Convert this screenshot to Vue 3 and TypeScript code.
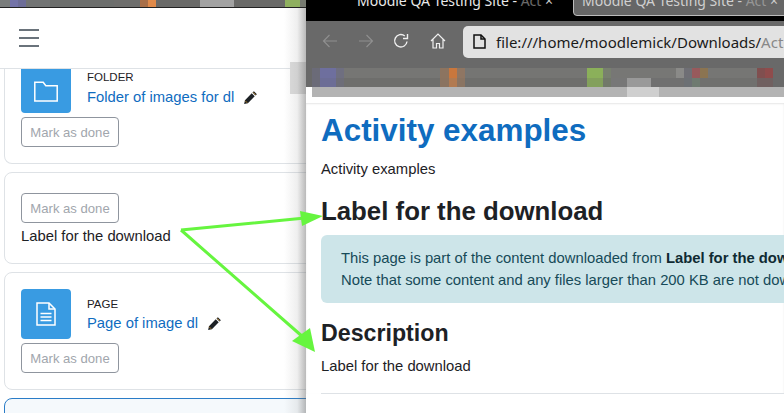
<script setup lang="ts">
interface Tile { w: number; c: string }
const topTiles: Tile[] = [
  { w: 10, c: '#7a7d7c' }, { w: 8, c: '#7373a8' }, { w: 8, c: '#6d6d98' }, { w: 24, c: '#727474' }, { w: 64, c: '#6c6e6c' },
  { w: 26, c: '#6e6e6c' }, { w: 8, c: '#a96f48' }, { w: 8, c: '#e08a4a' }, { w: 44, c: '#6a6a68' }, { w: 34, c: '#a2a2a2' }, { w: 51, c: '#6a6a68' },
  { w: 15, c: '#8fb05f' }, { w: 6, c: '#767a70' },
]
const rowA: Tile[] = [
  { w: 8, c: '#6b6b78' }, { w: 16, c: '#6e6f9e' }, { w: 8, c: '#6f6f80' }, { w: 96, c: '#767674' }, { w: 9, c: '#8c7460' },
  { w: 8, c: '#c9773d' }, { w: 8, c: '#8f7663' }, { w: 122, c: '#757573' }, { w: 16, c: '#8bb05a' }, { w: 8, c: '#78806f' },
  { w: 65, c: '#777775' }, { w: 8, c: '#8a8a88' }, { w: 8, c: '#6f6f75' }, { w: 8, c: '#985a5c' }, { w: 8, c: '#8b7451' }, { w: 49, c: '#767674' }, { w: 8, c: '#804f4f' }, { w: 8, c: '#8f4c4c' },
]
const rowB: Tile[] = [
  { w: 8, c: '#6b6b78' }, { w: 16, c: '#6c6d96' }, { w: 8, c: '#6d6d78' }, { w: 96, c: '#6e6e6c' }, { w: 9, c: '#8a7360' },
  { w: 8, c: '#b27a50' }, { w: 8, c: '#8a7462' }, { w: 122, c: '#6e6e6c' }, { w: 16, c: '#83a05c' }, { w: 8, c: '#72796a' },
  { w: 16, c: '#777' }, { w: 24, c: '#999' }, { w: 33, c: '#707070' }, { w: 8, c: '#6c7074' }, { w: 8, c: '#6e7a70' }, { w: 57, c: '#70706e' }, { w: 16, c: '#706060' },
]
</script>

<template>
  <div class="desktop">
    <section class="win-left">
      <div class="mosaic-top">
        <span v-for="(t, i) in topTiles" :key="i" :style="{ width: t.w + 'px', background: t.c }"></span>
      </div>
      <header class="moodle-bar">
        <div class="burger"><i></i><i></i><i></i></div>
      </header>
      <div class="course">
        <article class="card card-folder">
          <div class="activity">
            <div class="tile tile-cut">
              <svg width="24" height="21" viewBox="0 0 24 21" fill="none" stroke="#fff" stroke-width="1.5">
                <path d="M.8 20V1.2h8.400l2.600 3.600h11.400V20z" />
              </svg>
            </div>
            <div class="meta">
              <div class="kind">FOLDER</div>
              <div class="link-row"><a class="link">Folder of images for dl</a>
                <svg class="pencil" width="15" height="15" viewBox="0 0 16 16"><path d="M11.600 1.200l3.200 3.200-1.500 1.500-3.200-3.200zM9.300 3.500l3.200 3.200-7.300 7.300-4 1 .9-4.100z" fill="#1d2125" /><path d="M11 2.600l2.400 2.400M2.300 11.500l2.200 2.200" stroke="#f5a623" stroke-width=".7" /></svg>
              </div>
            </div>
          </div>
          <button class="done">Mark as done</button>
        </article>

        <article class="card card-label">
          <button class="done">Mark as done</button>
          <p class="label-text">Label for the download</p>
        </article>

        <article class="card card-page">
          <div class="activity">
            <div class="tile">
              <svg width="20" height="24" viewBox="0 0 20 24" fill="none" stroke="#fff" stroke-width="1.500">
                <path d="M1 1h12l6 6v16H1z" /><path d="M13 1v6h6" /><path d="M4.500 11.500h11M4.500 15h11M4.500 18.500h11" />
              </svg>
            </div>
            <div class="meta">
              <div class="kind">PAGE</div>
              <div class="link-row"><a class="link">Page of image dl</a>
                <svg class="pencil" width="15" height="15" viewBox="0 0 16 16"><path d="M11.600 1.200l3.200 3.200-1.500 1.500-3.200-3.200zM9.300 3.500l3.200 3.200-7.300 7.300-4 1 .9-4.100z" fill="#1d2125" /><path d="M11 2.600l2.400 2.400M2.300 11.500l2.200 2.200" stroke="#f5a623" stroke-width=".7" /></svg>
              </div>
            </div>
          </div>
          <button class="done">Mark as done</button>
        </article>

        <article class="card card-next"></article>
      </div>
      <div class="ghost"></div>
      <div class="edge-shadow"></div>
    </section>

    <section class="win-right">
      <div class="tabbar">
        <div class="tab tab-active">Moodle QA Testing Site - <span class="fade">Act</span> <span class="x">×</span></div>
        <div class="tab tab-other">Moodle QA Testing Site - <span class="fade">Act</span> <span class="x">×</span></div>
      </div>
      <div class="toolbar">
        <svg class="nav" width="16" height="16" viewBox="0 0 16 16" fill="none" stroke="#8f8f8f" stroke-width="1.200"><path d="M15 8H1.500M7.500 2l-6 6 6 6" /></svg>
        <svg class="nav" width="16" height="16" viewBox="0 0 16 16" fill="none" stroke="#8f8f8f" stroke-width="1.200"><path d="M1 8h13.500M8.500 2l6 6-6 6" /></svg>
        <svg class="nav" width="16" height="16" viewBox="0 0 16 16" fill="none" stroke="#f0f0f0" stroke-width="1.400"><path d="M14 8.500A6.200 6.200 0 1 1 11.800 3" /><path d="M14.500 1v4.500H10" fill="none" /></svg>
        <svg class="nav" width="16" height="16" viewBox="0 0 16 16" fill="none" stroke="#f0f0f0" stroke-width="1.200"><path d="M1 8l7-7 7 7M3 6.500V15h3.500v-4.500h3V15H13V6.500" /></svg>
        <div class="urlbar">
          <svg width="13" height="15" viewBox="0 0 13 15" fill="none" stroke="#111" stroke-width="1.500"><path d="M1 1h7l4 4v9H1z" /><path d="M8 1v4h4" /></svg>
          <span class="url">file:///home/moodlemick/Downloads/<span class="url-dim">Act</span></span>
        </div>
      </div>
      <div class="bookmarks">
        <div class="row"><span v-for="(t, i) in rowA" :key="i" :style="{ width: t.w + 'px', background: t.c }"></span></div>
        <div class="row row-b"><span v-for="(t, i) in rowB" :key="i" :style="{ width: t.w + 'px', background: t.c }"></span></div>
      </div>
      <div class="band"><div class="band-glow"></div></div>
      <div class="page">
        <h1>Activity examples</h1>
        <p class="intro">Activity examples</p>
        <h2 class="h-label">Label for the download</h2>
        <div class="alert">
          This page is part of the content downloaded from <b>Label for the download</b><br />
          Note that some content and any files larger than 200 KB are not downloaded
        </div>
        <h2 class="h-desc">Description</h2>
        <p class="desc">Label for the download</p>
        <hr />
      </div>
    </section>

    <svg class="arrows" width="784" height="413" viewBox="0 0 784 413">
      <path d="M181 230 L305 218 M181 230 L303 337" stroke="#66f53f" stroke-width="3" fill="none" />
      <path d="M300 211 L323 216 L302 226 Z" fill="#66f53f" />
      <path d="M292 341 L310 328 L315 352 Z" fill="#66f53f" />
    </svg>
  </div>
</template>

<style>
html, body { margin: 0; padding: 0; background: #fff; overflow: hidden; }
</style>

<style scoped>
.desktop { position: relative; width: 784px; height: 413px; overflow: hidden; font-family: "Liberation Sans", Arial, sans-serif; color: #1d2125; }
.win-left { position: absolute; left: 0; top: 0; width: 306px; height: 413px; background: #fff; overflow: hidden; }
.mosaic-top { height: 7px; display: flex; border-bottom: 1px solid #222; overflow: hidden; }
.mosaic-top span { flex: none; height: 100%; }
.moodle-bar { height: 60px; border-bottom: 1px solid #dee2e6; display: flex; align-items: center; padding-left: 19px; background: #fff; }
.burger { width: 20px; display: flex; flex-direction: column; gap: 6px; }
.burger i { display: block; height: 2px; background: #6a737b; }
.course { padding: 0 0 0 4px; display: flex; flex-direction: column; gap: 8px; }
.card { width: 320px; box-sizing: border-box; border: 1px solid #dee2e6; border-radius: 8px; padding: 0 0 0 16px; background: #fff; flex: none; }
.card-folder { height: 95px; border-top: none; border-radius: 0 0 8px 8px; }
.card-label { height: 92px; padding-top: 20px; }
.card-page { height: 118px; padding-top: 16px; }
.card-next { height: 40px; border-color: #2a7cc7; background: #f5f9fc; }
.activity { display: flex; gap: 16px; }
.tile { width: 50px; height: 50px; background: #399be2; border-radius: 4px; display: flex; align-items: center; justify-content: center; flex: none; }
.tile-cut { height: 44px; border-radius: 0 0 4px 4px; }
.meta { padding-top: 9px; }
.card-folder .meta { padding-top: 2px; }
.kind { font-size: 11.500px; line-height: 13px; color: #1d2125; }
.link-row { display: flex; align-items: center; margin-top: 1px; height: 22px; }
.card-folder .link-row { margin-top: 2px; }
.link { font-size: 14.800px; color: #0f6cbf; }
.pencil { margin-left: 9px; }
.done { display: block; width: 98px; height: 30px; box-sizing: border-box; border: 1px solid #8f959e; border-radius: 4px; background: #fff; color: #a1a6ad; font-family: inherit; font-size: 13.100px; padding: 0; margin-top: 4px; }
.card-label .done { margin-top: 0; }
.label-text { margin: 5px 0 0; font-size: 14.800px; line-height: 16px; color: #1d2125; }
.ghost { position: absolute; left: 290px; top: 62px; width: 16px; height: 32px; background: #ddd; }
.edge-shadow { position: absolute; right: 0; top: 8px; bottom: 0; width: 22px; background: linear-gradient(to right, rgba(120,120,120,0), rgba(120,120,120,.12) 60%, rgba(100,100,100,.45)); }
.win-right { position: absolute; left: 306px; top: 0; width: 478px; height: 413px; background: #fff; overflow: hidden; }
.tabbar { height: 21px; background: #000; position: relative; overflow: hidden; }
.tab { position: absolute; top: -9px; height: 25px; box-sizing: border-box; font-family: "Noto Sans", "DejaVu Sans", sans-serif; font-size: 14px; line-height: 20px; white-space: nowrap; overflow: hidden; }
.tab-active { left: 51px; color: #e8e8e8; }
.tab-other { left: 267px; width: 240px; padding-left: 8px; color: #d0d0d0; background: #666; border: 1px solid #bbb; border-radius: 0 0 4px 4px; line-height: 18px; }
.fade { opacity: .45; }
.x { color: #ccc; }
.toolbar { height: 39px; background: #696969; display: flex; align-items: center; padding-left: 16px; }
.nav { flex: none; margin-right: 20px; }
.nav:nth-child(2) { margin-right: 19px; }
.nav:nth-child(3) { margin-right: 21px; }
.nav:nth-child(4) { margin-right: 17px; }
.urlbar { flex: none; width: 330px; height: 32px; background: #e2e2e2; border-radius: 5px 0 0 5px; display: flex; align-items: center; padding-left: 10px; gap: 10px; margin-top: 2px; box-sizing: border-box; }
.url { font-family: "Noto Sans", "DejaVu Sans", sans-serif; font-size: 15px; color: #1a1a1a; white-space: nowrap; }
.url-dim { color: #888; }
.bookmarks { height: 27px; background: #696969; display: flex; flex-direction: column; justify-content: flex-end; }
.row { display: flex; height: 10px; padding-left: 6px; }
.row-b { height: 9px; }
.row span { flex: none; height: 100%; }
.band { height: 10px; background: #b3b3b3; margin-left: 6px; position: relative; }
.band-glow { position: absolute; left: 315px; top: 0; width: 32px; height: 10px; background: #cfcfcf; }
.page { padding: 0 0 0 15px; border-top: 6px solid #fff; box-shadow: inset 0 1px 2px rgba(0,0,0,.1); }
h1 { margin: 0; font-size: 31.400px; line-height: 38px; font-weight: 700; color: #0f6cbf; padding-top: 9px; }
.intro { margin: 10px 0 0; font-size: 14.800px; line-height: 18px; }
.h-label { margin: 19px 0 0; font-size: 25.800px; line-height: 28px; font-weight: 700; }
.alert { margin-top: 10px; width: 520px; height: 68px; box-sizing: border-box; padding: 12px 20px 0; background: #cde5e9; border-radius: 6px; font-size: 14.800px; line-height: 22px; color: #164a58; white-space: nowrap; overflow: hidden; }
.alert b { color: #0f2a32; }
.h-desc { margin: 16px 0 0; font-size: 23.200px; line-height: 28px; font-weight: 700; }
.desc { margin: 10px 0 0; font-size: 14.800px; line-height: 18px; }
hr { margin: 18px 0 0; border: 0; border-top: 1px solid #dee2e6; }
.arrows { position: absolute; left: 0; top: 0; pointer-events: none; }
</style>
